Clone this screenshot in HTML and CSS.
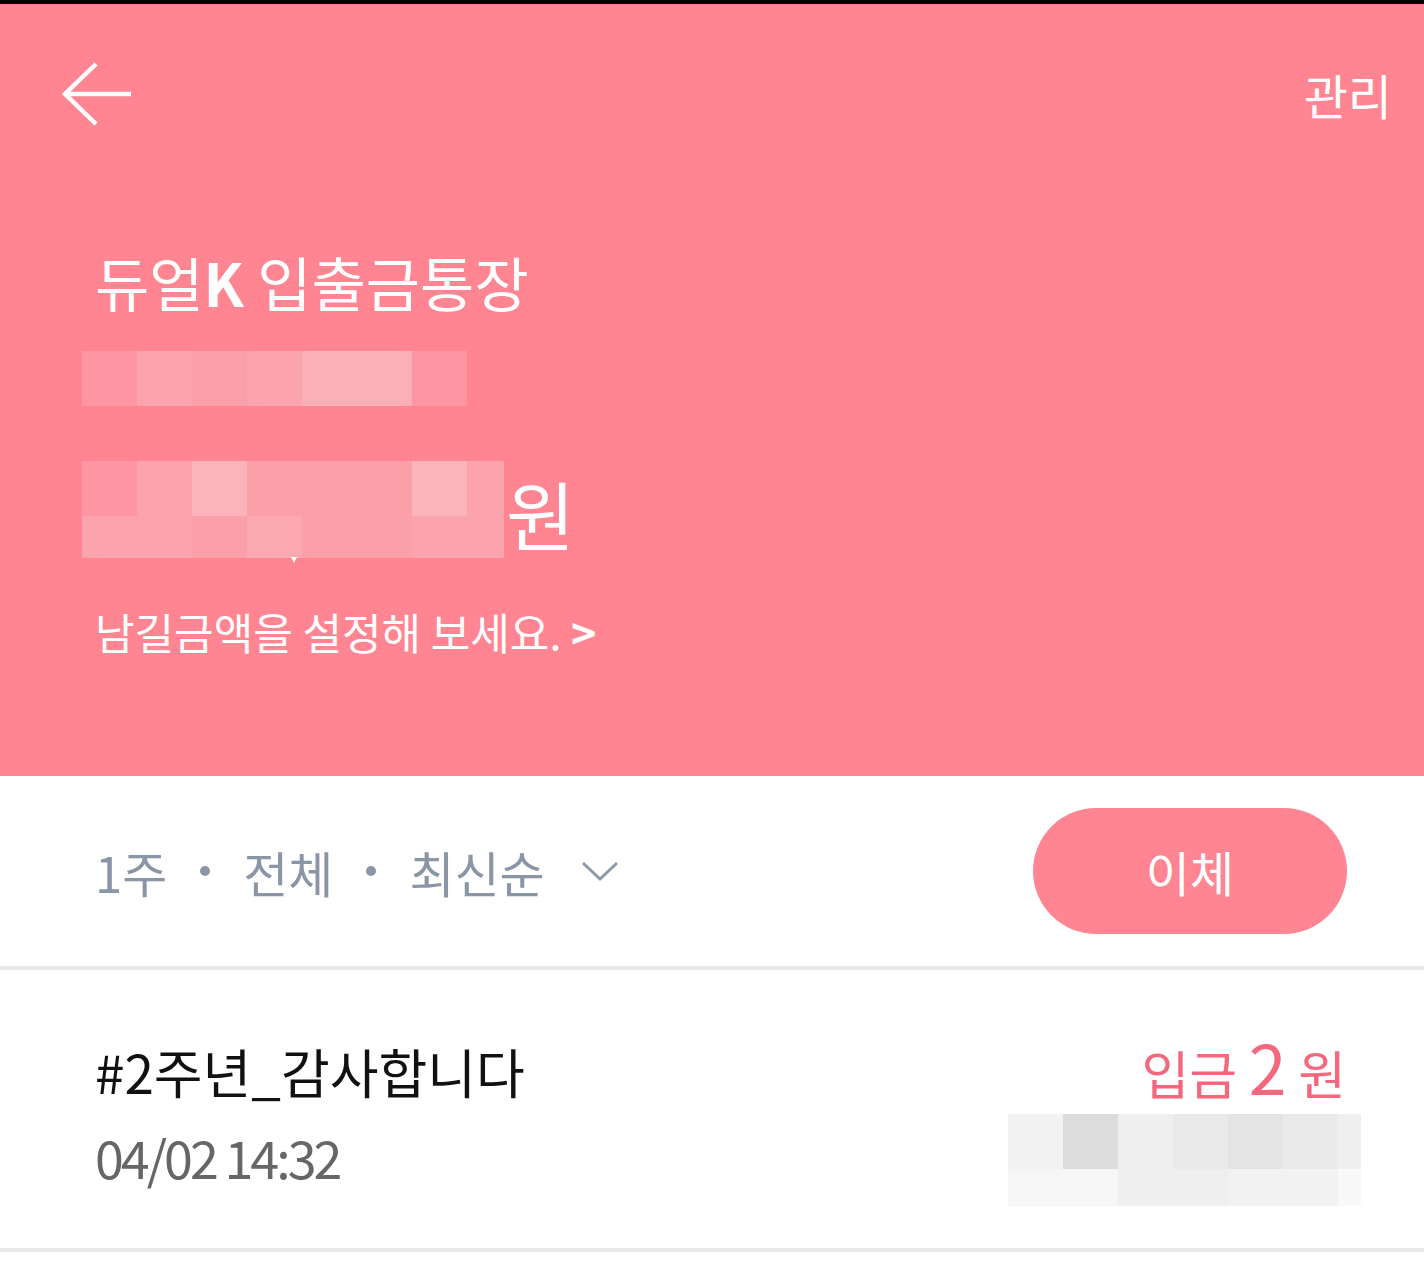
FILE: index.html
```html
<!DOCTYPE html>
<html>

<head>
    <title>듀얼K 입출금통장</title>
    <link rel="stylesheet" href="styles.css">
</head>

<body>
    <div class="statusBar"></div>
    <div class="header">
        <div class="topBar">
            <svg class="backIcon" width="72" height="64" viewBox="0 0 72 64">
                <path d="M35 2 L4 32 L35 62 M4 32 H70" fill="none" stroke="#fff" stroke-width="4.5" />
            </svg>
            <span class="manage">관리</span>
        </div>
        <h1 class="accountTitle">듀얼<b>K</b> 입출금통장</h1>
        <div class="mosaic accountNo">
            <i class="p1"></i><i class="p2"></i><i class="p4"></i><i class="p2"></i><i class="p5"></i><i class="p5"></i><i class="p1"></i>
        </div>
        <div class="balanceRow">
            <div class="mosaic balance">
                <div class="mosaicRow">
                    <i class="p1"></i><i class="p2"></i><i class="p3"></i><i class="p4"></i><i class="p4"></i><i class="p4"></i><i class="p3"></i><i class="p2 half"></i>
                </div>
                <div class="mosaicRow low">
                    <i class="p2"></i><i class="p2"></i><i class="p4"></i><i class="p6"></i><i class="p4"></i><i class="p4"></i><i class="p2"></i><i class="p2 half"></i>
                </div>
                <span class="commaTail"></span>
            </div>
            <span class="won">원</span>
        </div>
        <div class="hint">남길금액을 설정해 보세요. <b>&gt;</b></div>
    </div>

    <div class="filterBar">
        <div class="filters">
            <span>1주</span>
            <span class="dot"></span>
            <span>전체</span>
            <span class="dot"></span>
            <span>최신순</span>
            <svg class="chevron" width="38" height="22" viewBox="0 0 38 22">
                <polyline points="2,3 19,19 36,3" fill="none" stroke="#8d99a8" stroke-width="3" />
            </svg>
        </div>
        <button class="transferBtn">이체</button>
    </div>

    <div class="txRow">
        <div class="txInfo">
            <div class="txTitle">#2주년_감사합니다</div>
            <div class="txDate">04/02 14:32</div>
        </div>
        <div class="txSide">
            <div class="amount"><span>입금</span> <span class="amountValue">2</span> <span>원</span></div>
            <div class="mosaic rest">
                <div class="mosaicRow">
                    <i class="g2"></i><i class="g5"></i><i class="g3"></i><i class="g4"></i><i class="g6"></i><i class="g4"></i><i class="g3 part"></i>
                </div>
                <div class="mosaicRow low">
                    <i class="g1"></i><i class="g1"></i><i class="g3"></i><i class="g3"></i><i class="g2"></i><i class="g2"></i><i class="g0 part"></i>
                </div>
            </div>
        </div>
    </div>
</body>

</html>
```

FILE: styles.css
```css
body {
    margin: 0;
    background-color: #fff;
    font-family: "Noto Sans CJK KR", "Noto Sans", sans-serif;
}

.statusBar {
    height: 4px;
    background-color: #000;
}

.header {
    background-color: #ff8592;
    color: #fff;
    padding-bottom: 123px;
}

.topBar {
    display: flex;
    justify-content: space-between;
    align-items: center;
    padding: 58px 32px 0 61px;
}

.backIcon {
    display: block;
}

.manage {
    font-size: 48px;
    line-height: 1;
}

.accountTitle {
    margin: 126px 0 0 95px;
    font-size: 59px;
    font-weight: 400;
    line-height: 1;
}

.accountTitle b {
    font-weight: 700;
}

/* pixelated, hidden numbers */
.mosaic i {
    display: block;
    width: 55px;
    height: 55px;
}

.mosaicRow {
    display: flex;
}

.mosaicRow.low i {
    height: 42px;
}

.accountNo {
    display: flex;
    margin: 40px 0 0 82px;
}

.balanceRow {
    display: flex;
    align-items: flex-start;
    margin: 55px 0 0 82px;
}

.balance {
    position: relative;
}

.balance .half {
    width: 37px;
}

.commaTail {
    position: absolute;
    left: 209px;
    top: 96px;
    width: 0;
    height: 0;
    border-left: 3px solid transparent;
    border-right: 3px solid transparent;
    border-top: 6px solid #fff;
}

.won {
    margin: 14px 0 0 2px;
    font-size: 75px;
    line-height: 1;
}

.hint {
    margin: 52px 0 0 95px;
    font-size: 43px;
    line-height: 1;
}

.hint b {
    font-weight: 700;
}

.p1 { background-color: #fd96a2; }
.p2 { background-color: #fba4ae; }
.p3 { background-color: #fcb4bc; }
.p4 { background-color: #fb9fa9; }
.p5 { background-color: #fbafb7; }
.p6 { background-color: #fba8b1; }

.g0 { background-color: #f9f9f9; }
.g1 { background-color: #f6f6f6; }
.g2 { background-color: #f2f2f2; }
.g3 { background-color: #efefef; }
.g4 { background-color: #eaeaea; }
.g5 { background-color: #dcdcdc; }
.g6 { background-color: #e4e4e4; }

.filterBar {
    display: flex;
    justify-content: space-between;
    align-items: center;
    height: 190px;
    padding: 0 77px 0 95px;
    border-bottom: 4px solid #e9e9e9;
}

.filters {
    display: flex;
    align-items: center;
    color: #8a96a6;
    font-size: 49px;
    line-height: 1;
}

.dot {
    width: 10px;
    height: 10px;
    margin: 0 33px;
    border-radius: 50%;
    background-color: #8a96a6;
}

.chevron {
    margin-left: 36px;
}

.transferBtn {
    width: 314px;
    height: 126px;
    border: none;
    border-radius: 63px;
    background-color: #ff8592;
    color: #fff;
    font-family: inherit;
    font-size: 48px;
    padding: 0;
}

.txRow {
    display: flex;
    justify-content: space-between;
    box-sizing: border-box;
    height: 282px;
    padding: 63px 63px 0 95px;
    border-bottom: 4px solid #e9e9e9;
}

.txInfo {
    margin-top: 12px;
}

.txTitle {
    color: #111;
    font-size: 53px;
    line-height: 1;
}

.txDate {
    margin-top: 33px;
    color: #666;
    font-size: 52px;
    letter-spacing: -3px;
    line-height: 1;
}

.txSide {
    display: flex;
    flex-direction: column;
    align-items: flex-end;
}

.amount {
    margin-right: 15px;
    color: #f3687c;
    font-size: 52px;
    line-height: 66px;
}

.amountValue {
    font-size: 68px;
}

.rest {
    margin-top: 8px;
}

.rest .part {
    width: 23px;
}

.rest .low i {
    height: 37px;
}
```
